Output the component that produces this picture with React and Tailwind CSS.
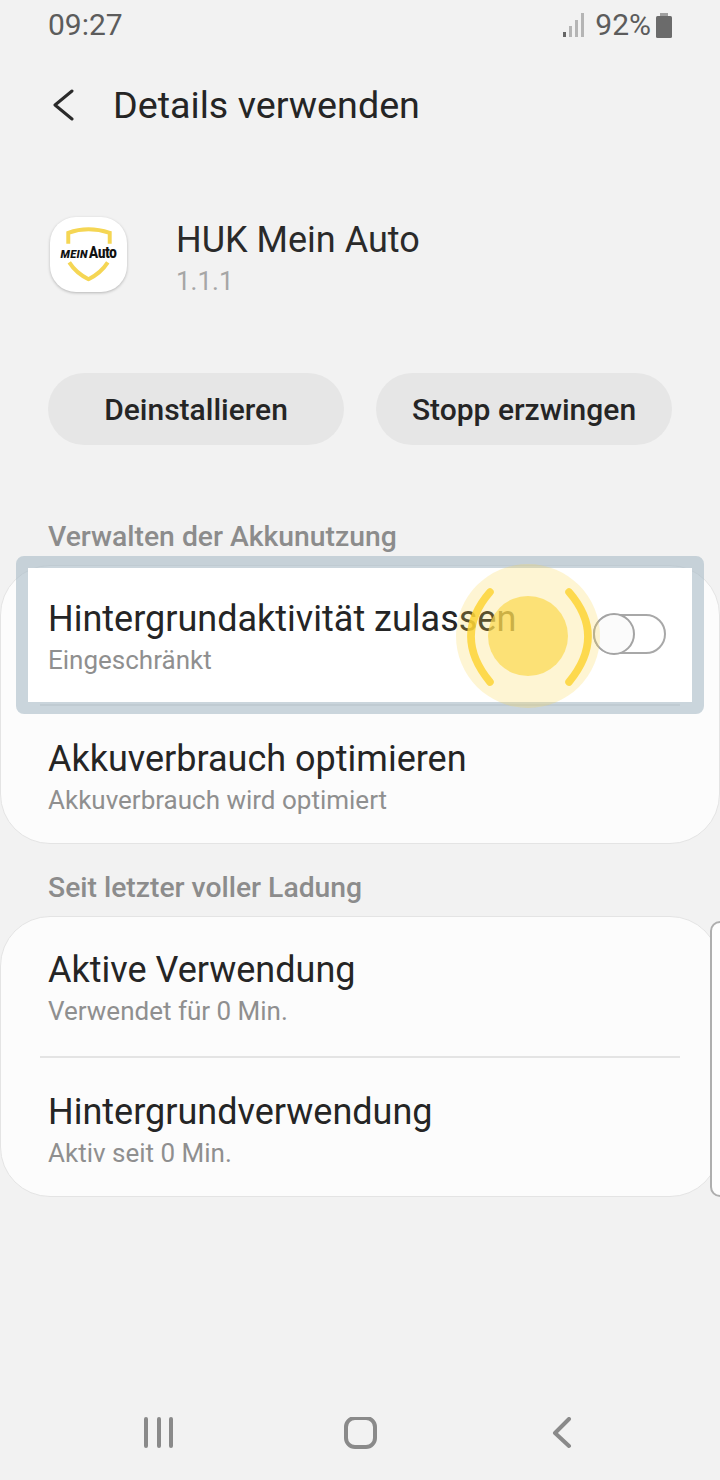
import React from 'react';

const FONT = { fontFamily: 'Roboto, sans-serif' };

function Row({ title, subtitle, className, children }) {
  return (
    <div className={`relative pl-[47px] ${className}`}>
      {children}
      <div className="relative pt-[33px] text-[36px] leading-[40px] text-[#252525]">{title}</div>
      <div className="relative mt-[6px] text-[26px] leading-[30px] text-[#8f8f8f]">{subtitle}</div>
    </div>
  );
}

function SectionLabel({ children, className }) {
  return <div className={`pl-[48px] text-[28.3px] leading-[32px] font-medium text-[#8c8c8c] ${className}`}>{children}</div>;
}

function AppIcon() {
  return (
    <div className="relative mt-[1px] h-[75px] w-[77px] rounded-[26px] bg-white shadow-[0_1px_3px_rgba(0,0,0,0.25)]">
      <svg viewBox="0 0 77 76" className="absolute inset-0 h-full w-full">
        <path d="M18 27 V16 Q28 12.5 38.5 12.5 Q49 12.5 60 16 V27" fill="none" stroke="#f5d654" strokeWidth="4" />
        <path d="M19 46 Q26 57 38.5 63 Q51 57 58 46" fill="none" stroke="#f5d654" strokeWidth="4" />
      </svg>
      <div className="absolute inset-x-0 top-[26px] flex items-baseline justify-center gap-[1px] leading-[20px] text-[#111]">
        <span className="text-[11px] font-black italic tracking-[0.3px]">MEIN</span>
        <span className="text-[16px] font-bold tracking-[-0.6px] [font-family:'Roboto_Condensed','Liberation_Sans_Narrow',Roboto,sans-serif]">Auto</span>
      </div>
    </div>
  );
}

function Toggle() {
  return (
    <div className="absolute left-[592px] top-[47px] h-[42px] w-[73px]">
      <div className="absolute inset-y-[1px] left-0 right-0 rounded-full border-2 border-[#a8a8a8]" />
      <div className="absolute left-0 top-0 h-[42px] w-[42px] rounded-full border-2 border-[#a4a4a4] bg-[#fbfbfb]" />
    </div>
  );
}

export default function App() {
  return (
    <div className="relative h-[1480px] w-[720px] overflow-hidden bg-[#f2f2f2]" style={FONT}>
      {/* status bar */}
      <div className="flex h-[50px] items-center justify-between pl-[48px] pr-[48px]">
        <span className="text-[30px] leading-[50px] text-[#5c5c5c]">09:27</span>
        <div className="flex items-center">
          <svg width="22" height="24" viewBox="0 0 22 24" className="mr-[10px]">
            <rect x="0" y="19" width="3" height="5" fill="#666" />
            <rect x="6" y="13" width="3" height="11" fill="#b5b5b5" />
            <rect x="12" y="7" width="3" height="17" fill="#b5b5b5" />
            <rect x="18" y="0" width="3" height="24" fill="#b5b5b5" />
          </svg>
          <span className="text-[30px] leading-[50px] text-[#5c5c5c]">92%</span>
          <svg width="16" height="25" viewBox="0 0 16 25" className="ml-[5px]">
            <rect x="4" y="0" width="8" height="4" fill="#a0a0a0" />
            <rect x="0" y="3" width="16" height="22" rx="1.5" fill="#6b6b6b" />
          </svg>
        </div>
      </div>

      {/* title */}
      <div className="flex h-[110px] items-center pl-[52px]">
        <svg width="24" height="32" viewBox="0 0 24 32" fill="none" stroke="#2a2a2a" strokeWidth="3" strokeLinecap="round" strokeLinejoin="round">
          <path d="M20 2 L3 16 L20 30" />
        </svg>
        <h1 className="ml-[37px] text-[37.7px] leading-[44px] font-normal text-[#252525]">Details verwenden</h1>
      </div>

      {/* app info */}
      <div className="mt-[56px] flex h-[76px] pl-[50px]">
        <AppIcon />
        <div className="ml-[49px]">
          <div className="text-[36px] leading-[48px] text-[#2a2a2a]">HUK Mein Auto</div>
          <div className="mt-[2px] text-[26px] leading-[30px] text-[#a6a6a6]">1.1.1</div>
        </div>
      </div>

      {/* buttons */}
      <div className="mt-[81px] flex gap-[32px] px-[48px]">
        <button className="h-[72px] flex-1 rounded-full bg-[#e6e6e6] text-[30px] font-medium text-[#252525]">Deinstallieren</button>
        <button className="h-[72px] flex-1 rounded-full bg-[#e6e6e6] text-[30px] font-medium text-[#252525]">Stopp erzwingen</button>
      </div>

      <SectionLabel className="mt-[76px]">Verwalten der Akkunutzung</SectionLabel>

      {/* battery card */}
      <div className="mt-[12px] h-[279px] rounded-[50px] border border-[#e4e4e4] bg-[#fcfcfc]">
        <Row title="Hintergrundaktivität zulassen" subtitle="Eingeschränkt" className="h-[138px]">
          <div className="absolute inset-x-[27px] bottom-[2px] top-[2px] bg-white" />
          <Toggle />
        </Row>
        <div className="mx-[39px] h-[2px] bg-[#e4e4e4]" />
        <Row title="Akkuverbrauch optimieren" subtitle="Akkuverbrauch wird optimiert" className="h-[137px]" />
      </div>

      <SectionLabel className="mt-[28px]">Seit letzter voller Ladung</SectionLabel>

      {/* usage card */}
      <div className="mt-[12px] h-[281px] rounded-[50px] border border-[#e4e4e4] bg-[#fcfcfc]">
        <Row title="Aktive Verwendung" subtitle="Verwendet für 0 Min." className="h-[139px]" />
        <div className="mx-[39px] mb-[1px] h-[2px] bg-[#e4e4e4]" />
        <Row title="Hintergrundverwendung" subtitle="Aktiv seit 0 Min." className="h-[137px]" />
      </div>

      {/* edge panel handle */}
      <div className="absolute left-[710px] top-[921px] h-[276px] w-[20px] rounded-l-[10px] border-2 border-[#aeaeae] bg-[#fdfdfd]" />

      {/* tutorial highlight */}
      <div className="absolute left-[16px] top-[556px] h-[158px] w-[688px] rounded-[8px] border-[12px] border-[#a9bbc7]/60" />
      <svg width="160" height="160" viewBox="0 0 160 160" className="absolute left-[448px] top-[556px]">
        <circle cx="80" cy="80" r="72" fill="#fdd94f" fillOpacity="0.25" />
        <circle cx="80" cy="80" r="40" fill="#fbd94f" fillOpacity="0.7" />
        <path d="M42 36 Q4 80 42 126" fill="none" stroke="#fdd435" strokeOpacity="0.85" strokeWidth="7.5" strokeLinecap="round" />
        <path d="M121 36 Q159 80 121 126" fill="none" stroke="#fdd435" strokeOpacity="0.85" strokeWidth="7.5" strokeLinecap="round" />
      </svg>

      {/* nav bar */}
      <div className="absolute inset-x-0 bottom-[31px] h-[32px]">
        <svg width="480" height="32" viewBox="0 0 480 32" className="ml-[120px]" fill="none" stroke="#8a8a8a" strokeWidth="4" strokeLinecap="round" strokeLinejoin="round">
          <path d="M26 2 V29 M39 2 V29 M51 2 V29" />
          <rect x="226" y="1" width="29" height="29" rx="9" />
          <path d="M449 2 L435 16 L449 29" />
        </svg>
      </div>
    </div>
  );
}
